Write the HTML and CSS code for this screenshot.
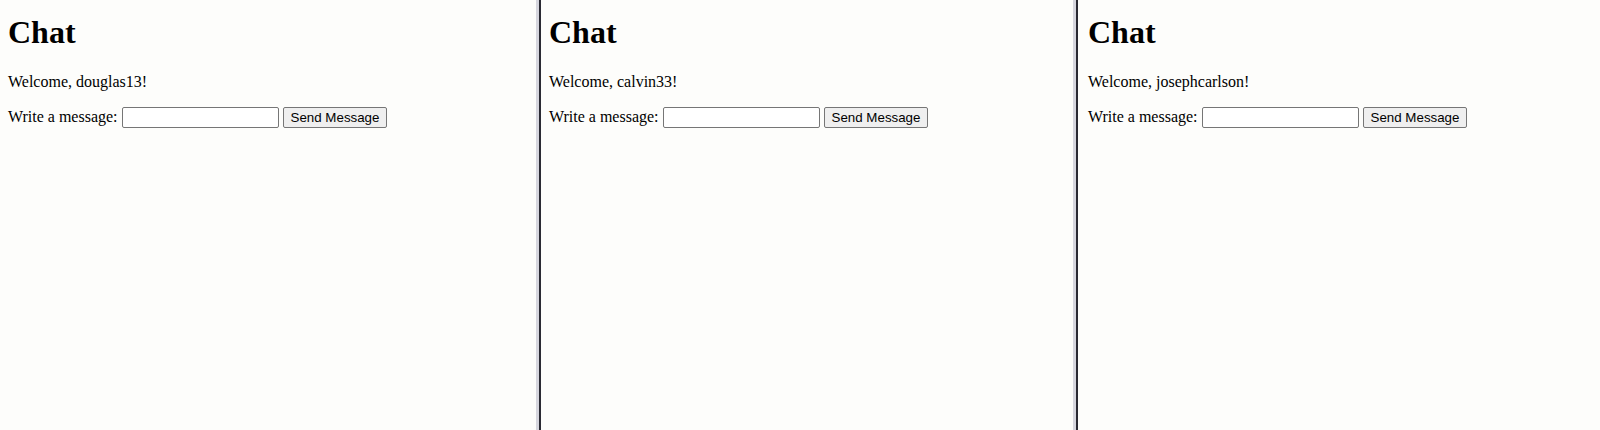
FILE: index.html
```html
<!DOCTYPE html>
<html>
<head>
<meta charset="utf-8">
<title>Chat</title>
<link rel="stylesheet" href="styles.css">
</head>
<body>
<div class="frames">
  <section class="panel panel-first">
    <h1 class="title">Chat</h1>
    <p class="welcome">Welcome, douglas13!</p>
    <p class="composer">Write a message: <input class="msg" type="text"> <button class="send">Send Message</button></p>
  </section>
  <section class="panel panel-mid">
    <h1 class="title">Chat</h1>
    <p class="welcome">Welcome, calvin33!</p>
    <p class="composer">Write a message: <input class="msg" type="text"> <button class="send">Send Message</button></p>
  </section>
  <section class="panel panel-last">
    <h1 class="title">Chat</h1>
    <p class="welcome">Welcome, josephcarlson!</p>
    <p class="composer">Write a message: <input class="msg" type="text"> <button class="send">Send Message</button></p>
  </section>
</div>
</body>
</html>
```
FILE: styles.css
```css
html, body {
  margin: 0;
  padding: 0;
  height: 100%;
  background: #fdfdfb;
}
body {
  font-family: "Liberation Serif", "Times New Roman", serif;
  font-size: 16px;
  color: #000;
  overflow: hidden;
}
.frames {
  display: flex;
  height: 430px;
}
.panel {
  box-sizing: border-box;
  padding: 14px 8px 0 8px;
  background: #fdfdfb;
}
.panel-first {
  width: 539px;
  border-right: 3px solid #d6d6de;
}
.panel-mid {
  width: 537px;
  border-left: 2px solid #2a2a33;
  border-right: 3px solid #d6d6de;
}
.panel-last {
  flex: 1;
  border-left: 2px solid #2a2a33;
  padding-left: 10px;
}
.title {
  font-size: 32px;
  font-weight: bold;
  margin: 0 0 22px 0;
}
.welcome {
  margin: 0 0 16px 0;
}
.composer {
  margin: 0;
}
.msg {
  font-family: "Liberation Sans", Arial, sans-serif;
  font-size: 13.333px;
  width: 157px;
  height: 21px;
  box-sizing: border-box;
  border: 1px solid #767676;
  border-radius: 2px;
  padding: 1px 2px;
  background: #fff;
  vertical-align: baseline;
}
.send {
  font-family: "Liberation Sans", Arial, sans-serif;
  font-size: 13.333px;
  height: 21px;
  box-sizing: border-box;
  border: 1px solid #767676;
  border-radius: 2px;
  background: #efefef;
  padding: 1px 7px;
  color: #000;
}
```
